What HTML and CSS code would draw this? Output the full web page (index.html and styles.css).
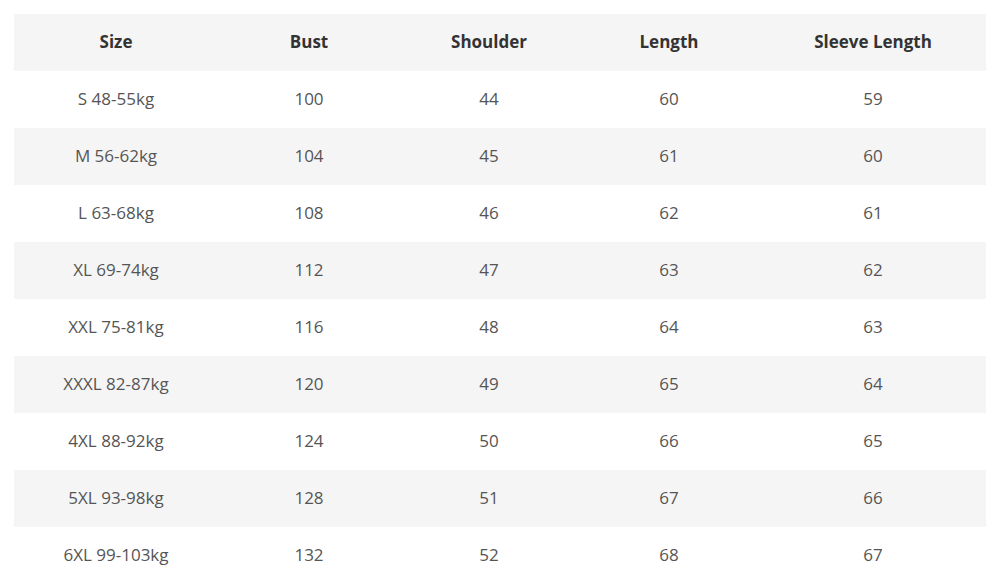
FILE: index.html
```html
<!DOCTYPE html>
<html>
<head>
<meta charset="utf-8">
<link rel="stylesheet" href="styles.css">
</head>
<body>
<table class="size-table">
  <colgroup>
    <col class="c1"><col class="c2"><col class="c3"><col class="c4"><col class="c5">
  </colgroup>
  <thead>
    <tr><th>Size</th><th>Bust</th><th>Shoulder</th><th>Length</th><th>Sleeve Length</th></tr>
  </thead>
  <tbody>
    <tr><td>S 48-55kg</td><td>100</td><td>44</td><td>60</td><td>59</td></tr>
    <tr><td>M 56-62kg</td><td>104</td><td>45</td><td>61</td><td>60</td></tr>
    <tr><td>L 63-68kg</td><td>108</td><td>46</td><td>62</td><td>61</td></tr>
    <tr><td>XL 69-74kg</td><td>112</td><td>47</td><td>63</td><td>62</td></tr>
    <tr><td>XXL 75-81kg</td><td>116</td><td>48</td><td>64</td><td>63</td></tr>
    <tr><td>XXXL 82-87kg</td><td>120</td><td>49</td><td>65</td><td>64</td></tr>
    <tr><td>4XL 88-92kg</td><td>124</td><td>50</td><td>66</td><td>65</td></tr>
    <tr><td>5XL 93-98kg</td><td>128</td><td>51</td><td>67</td><td>66</td></tr>
    <tr><td>6XL 99-103kg</td><td>132</td><td>52</td><td>68</td><td>67</td></tr>
  </tbody>
</table>
</body>
</html>
```
FILE: styles.css
```css
html, body {
  margin: 0;
  padding: 0;
  background: #ffffff;
}
body {
  padding: 14px;
  font-family: "Open Sans", "Liberation Sans", sans-serif;
}
.size-table {
  width: 972px;
  border-collapse: collapse;
  table-layout: fixed;
  font-size: 17px;
}
.c1 { width: 204px; }
.c2 { width: 182px; }
.c3 { width: 178px; }
.c4 { width: 182px; }
.c5 { width: 226px; }
.size-table th,
.size-table td {
  height: 55px;
  padding: 0 0 2px;
  text-align: center;
  vertical-align: middle;
}
.size-table th {
  font-weight: 700;
  color: #333333;
  background: #f5f5f5;
}
.size-table td {
  color: #555555;
}
.size-table tbody tr:nth-child(even) td {
  background: #f5f5f5;
}
```
